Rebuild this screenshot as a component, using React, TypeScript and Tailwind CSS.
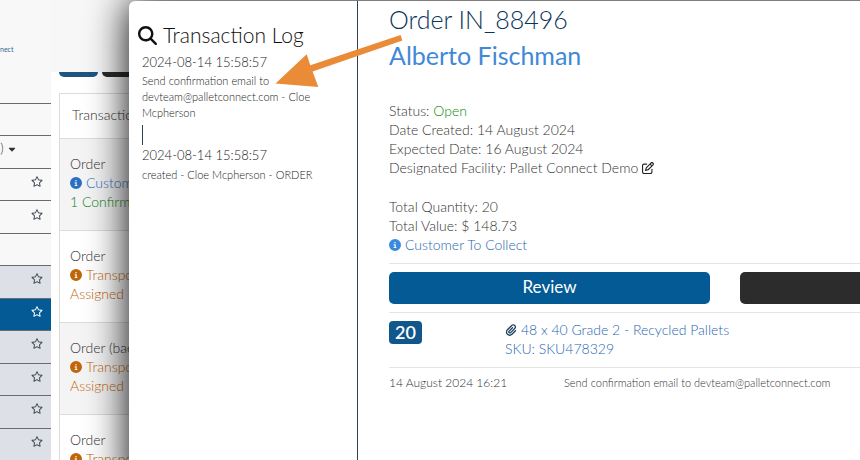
import React from "react";
import {
    FaCaretDown,
    FaCircleInfo,
    FaMagnifyingGlass,
    FaPaperclip,
    FaRegPenToSquare,
    FaRegStar,
} from "react-icons/fa6";

const SIDEBAR_ROWS = [
    { kind: "blank" },
    { kind: "filter" },
    { kind: "item" },
    { kind: "item" },
    { kind: "blank" },
    { kind: "shaded" },
    { kind: "active" },
    { kind: "shaded" },
    { kind: "shaded" },
    { kind: "shaded" },
    { kind: "shaded" },
];

const ROW_STYLES: Record<string, string> = {
    blank: "bg-[#f8f8f8] text-[#333]",
    filter: "bg-[#f8f8f8] text-[#333]",
    item: "bg-[#f8f8f8] text-[#444b55]",
    shaded: "bg-[#dde1e7] text-[#444b55]",
    active: "bg-[#045a94] text-white",
};

const TRANSACTIONS = [
    { type: "Order", status: "Customer To Collect", note: "1 Confirmed", statusColor: "text-[#2a6fc4]", noteColor: "text-[#0f8218]" },
    { type: "Order", status: "Transport Not", note: "Assigned", statusColor: "text-[#c0660a]", noteColor: "text-[#c0660a]" },
    { type: "Order (back order)", status: "Transport Not", note: "Assigned", statusColor: "text-[#c0660a]", noteColor: "text-[#c0660a]" },
    { type: "Order", status: "Transport Not", note: "Assigned", statusColor: "text-[#c0660a]", noteColor: "text-[#c0660a]" },
];

function Sidebar() {
    return (
        <aside className="flex w-[51px] shrink-0 flex-col bg-[#f8f8f8]">
            <div className="h-[103px] shrink-0 pt-11">
                <p className="text-[7px] leading-[10px] font-normal text-[#2f6690]">nect</p>
            </div>
            {SIDEBAR_ROWS.map((row, i) => (
                <div key={i} className={`flex flex-1 items-center border-t border-[#6b6b6b] pb-[6px] ${ROW_STYLES[row.kind]}`}>
                    {row.kind === "filter" && (
                        <button className="flex items-center gap-1 text-[13px]" aria-label="Filter">
                            <span className="w-1 text-[#333]">)</span>
                            <FaCaretDown className="h-[10px] w-2" />
                        </button>
                    )}
                    {row.kind !== "filter" && row.kind !== "blank" && (
                        <button className="ml-auto pr-2" aria-label="Favourite">
                            <FaRegStar className="h-[11px] w-3" />
                        </button>
                    )}
                </div>
            ))}
        </aside>
    );
}

function TransactionTable() {
    return (
        <table className="w-full border-collapse border border-[#dcdcdc] text-left text-sm leading-[19px] whitespace-nowrap text-[#333]">
            <thead>
                <tr className="h-[45px] border-b border-[#dcdcdc]">
                    <th className="px-3 pb-1 font-light">Transaction</th>
                </tr>
            </thead>
            <tbody>
                {TRANSACTIONS.map((t, i) => (
                    <tr key={i} className="border-b border-[#dcdcdc] odd:bg-[#f4f4f4]">
                        <td className="px-[10px] pt-[15px] pb-[19px]">
                            <div>{t.type}</div>
                            <div className={`flex items-center gap-1 ${t.statusColor}`}>
                                <FaCircleInfo className="h-3 w-3 shrink-0" />
                                {t.status}
                            </div>
                            <div className={t.noteColor}>{t.note}</div>
                        </td>
                    </tr>
                ))}
            </tbody>
        </table>
    );
}

function TransactionLog() {
    return (
        <section className="w-[229px] shrink-0 border-r border-[#2f4254] pt-5 pl-[13px]">
            <h2 className="-ml-1 flex items-center gap-[6px] text-[21px] leading-[28px] text-[#111]">
                <FaMagnifyingGlass className="h-[19px] w-[19px]" />
                Transaction Log
            </h2>
            <div className="pt-1 pr-10 text-[11px] leading-4 text-[#222]">
                <time className="block text-[13px] leading-[18px]">2024-08-14 15:58:57</time>
                <p className="pt-[2px]">Send confirmation email to devteam@palletconnect.com - Cloe Mcpherson</p>
                <div className="mt-1 h-5 border-l border-[#2f4254]" />
                <time className="mt-px block text-[13px] leading-[18px]">2024-08-14 15:58:57</time>
                <p className="pt-[3px]">created - Cloe Mcpherson - ORDER</p>
            </div>
        </section>
    );
}

function OrderDetails() {
    return (
        <section className="grow pl-[31px] text-sm leading-[19px] text-[#333]">
            <h1 className="text-[25px] leading-9 text-[#0b3558]">Order IN_88496</h1>
            <h2 className="text-[25px] leading-9 font-normal text-[#4189d6]">Alberto Fischman</h2>

            <div className="pt-7">
                <p>Status: <span className="text-[#088a08]">Open</span></p>
                <p>Date Created: 14 August 2024</p>
                <p>Expected Date: 16 August 2024</p>
                <p className="flex items-center gap-1">
                    Designated Facility: Pallet Connect Demo
                    <button aria-label="Edit facility"><FaRegPenToSquare className="h-3 w-3 text-[#222]" /></button>
                </p>
            </div>
            <div className="pt-5 pb-[9px]">
                <p>Total Quantity: 20</p>
                <p>Total Value: $ 148.73</p>
                <p className="flex items-center gap-1 text-[#1f66b0]">
                    <FaCircleInfo className="h-3 w-3 text-[#3a8be0]" />
                    Customer To Collect
                </p>
            </div>

            {/* Actions */}
            <div className="grid grid-cols-[321px_321px] gap-[30px] border-y border-[#e2e4e6] py-2">
                <button className="h-8 rounded-[5px] bg-[#045a94] pb-1 text-[17px] font-normal text-white">Review</button>
                <button className="h-8 rounded-[5px] bg-[#2c2c2c]" aria-label="More actions" />
            </div>

            <div className="flex border-b border-[#e2e4e6] pt-[7px] pb-[9px] text-[#1f66b0]">
                <div className="w-[116px] pt-px">
                    <span className="inline-block rounded-[4px] bg-[#11578c] px-[6px] text-lg leading-[23px] font-semibold text-white">20</span>
                </div>
                <div>
                    <a href="#item" className="flex items-center gap-1">
                        <FaPaperclip className="h-3 w-3 text-[#1d3f60]" />
                        48 x 40 Grade 2 - Recycled Pallets
                    </a>
                    <p>SKU: SKU478329</p>
                </div>
            </div>

            <div className="flex pt-[5px] text-[11px]">
                <time className="w-[175px] text-xs leading-[19px]">14 August 2024 16:21</time>
                <p>Send confirmation email to devteam@palletconnect.com</p>
            </div>
        </section>
    );
}

export default function App() {
    return (
        <div className="relative flex h-screen overflow-hidden bg-white font-[Lato,sans-serif] font-light">
            <Sidebar />
            <div className="min-w-0 flex-1">
                <header className="h-[72px] bg-[#f7f7f7]" />
                <div className="flex gap-1 px-2">
                    <div className="h-[5px] w-[39px] rounded-b-[5px] bg-[#1d5580]" />
                    <div className="h-[5px] w-[39px] rounded-b-[5px] bg-[#2c2c2c]" />
                </div>
                <div className="px-2 pt-4">
                    <TransactionTable />
                </div>
            </div>

            {/* Order modal */}
            <div role="dialog" className="absolute top-px -bottom-10 left-[129px] flex w-full rounded-md bg-white shadow-[0_0_40px_#000]">
                <TransactionLog />
                <OrderDetails />
                <svg className="pointer-events-none absolute top-8 left-36" width="132" height="60" viewBox="273 33 132 60" fill="#ea8b37" aria-hidden="true">
                    <path d="M275.5 83.5 306.7 54.3 310.3 65.2 400.6 35 402.4 40.4 312.6 71.5 318.3 87Z" />
                </svg>
            </div>
        </div>
    );
}
